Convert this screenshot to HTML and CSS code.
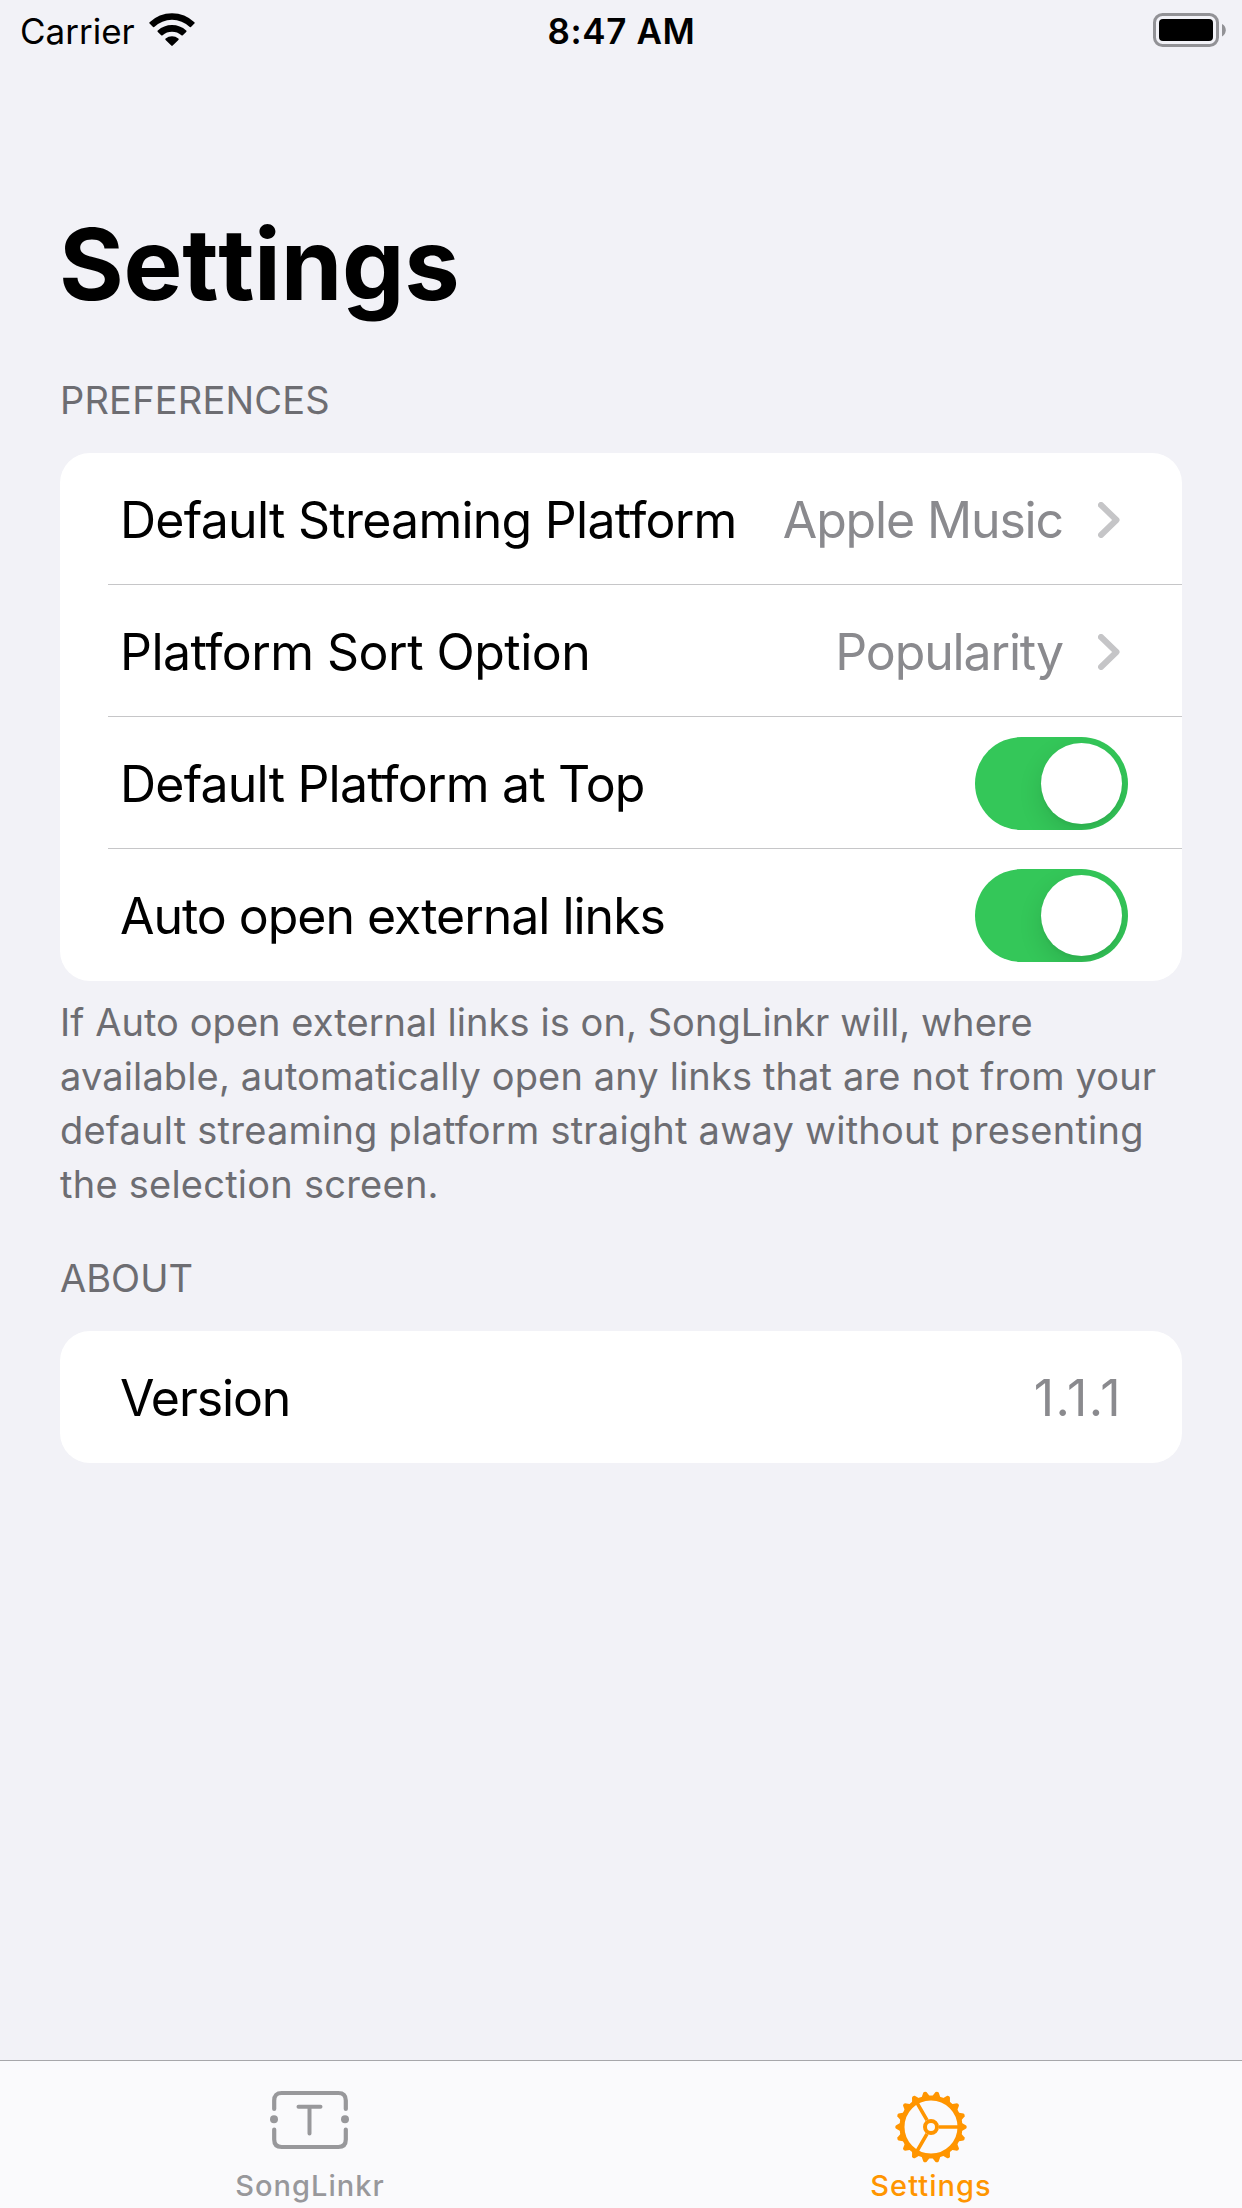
FILE: index.html
```html
<!DOCTYPE html>
<html lang="en">
<head>
<meta charset="utf-8">
<title>Settings</title>
<link rel="stylesheet" href="styles.css">
</head>
<body>
<div class="screen">
  <header class="status">
    <div class="status-left">
      <span class="carrier">Carrier</span>
      <svg class="wifi" viewBox="0 0 46 33" width="46" height="33"><path d="M0.600 9.300A32 32 0 0 1 45.400 9.300Q46 10 45.400 10.600L42.200 13.800Q41.500 14.500 40.800 13.900A26 26 0 0 0 5.200 13.900Q4.500 14.500 3.800 13.800L0.600 10.600Q0 10 0.600 9.300zM8.800 17.600A21 21 0 0 1 37.200 17.600Q37.900 18.300 37.200 19L33.800 22.300Q33.100 22.900 32.400 22.300A14.500 14.500 0 0 0 13.600 22.300Q12.900 22.900 12.200 22.300L8.800 19Q8.100 18.300 8.800 17.600zM16.700 25.600A9.500 9.500 0 0 1 29.300 25.600Q30.100 26.300 29.400 27L23.700 32.600Q23 33.200 22.300 32.600L16.600 27Q15.900 26.300 16.700 25.600z"/></svg>
    </div>
    <span class="time">8:47 AM</span>
    <div class="status-right">
      <svg class="battery" width="73" height="34" viewBox="0 0 73 34"><rect x="1.500" y="1.500" width="63" height="31" rx="8" fill="none" stroke="#929296" stroke-width="3"/><rect x="6" y="6" width="54" height="22" rx="4"/><path d="M69 11v12.400c5-2.400 5-10 0-12.400z" fill="#929296"/></svg>
    </div>
  </header>
  <main class="content">
    <h1 class="title">Settings</h1>
    <h2 class="label label-prefs">PREFERENCES</h2>
    <section class="card">
      <div class="row"><span class="name n1">Default Streaming Platform</span><span class="value">Apple Music</span><svg class="chevron" width="22" height="36" viewBox="0 0 22 36"><path d="M3 3l15.500 15L3 33"/></svg></div>
      <div class="row"><span class="name n2">Platform Sort Option</span><span class="value">Popularity</span><svg class="chevron" width="22" height="36" viewBox="0 0 22 36"><path d="M3 3l15.500 15L3 33"/></svg></div>
      <div class="row"><span class="name n3">Default Platform at Top</span><span class="toggle"><span class="knob"></span></span></div>
      <div class="row"><span class="name n4">Auto open external links</span><span class="toggle"><span class="knob"></span></span></div>
    </section>
    <p class="note"><span class="l1">If Auto open external links is on, SongLinkr will, where</span><br><span class="l2">available, automatically open any links that are not from your</span><br><span class="l3">default streaming platform straight away without presenting</span><br><span class="l4">the selection screen.</span></p>
    <h2 class="label label-about">ABOUT</h2>
    <section class="card"><div class="row"><span class="name n5">Version</span><span class="value version">1.1.1</span></div></section>
  </main>
  <nav class="tabs">
    <div class="tab">
      <svg width="80" height="60" viewBox="0 0 80 60" fill="none" stroke="currentColor" stroke-width="4.200" stroke-linecap="round"><path d="M4.200 19V10.500Q4.200 3 11.700 3H68.300Q75.800 3 75.800 10.500V19M4.200 39.500V49.500Q4.200 57 11.700 57H68.300Q75.800 57 75.800 49.500V39.500"/><path d="M28.500 16.800H50.500M39.500 16.800V43.500" stroke-width="4"/><g fill="currentColor" stroke="none"><circle cx="4" cy="29.300" r="4"/><circle cx="75" cy="29.300" r="4"/></g></svg>
      <span class="tab-name">SongLinkr</span>
    </div>
    <div class="tab active">
      <svg width="74" height="74" viewBox="-37 -37 74 74" fill="none" stroke="currentColor">
        <defs><path id="tooth" d="M30 -4.500L35.200 -1.600Q36.400 0 35.200 1.600L30 4.500z" fill="currentColor" stroke="none"/></defs>
        <circle r="29" stroke-width="5"/><circle r="6" stroke-width="4"/>
        <path d="M8 0H28M-4 -6.900L-14 -24.200M-4 6.900L-14 24.200" stroke-width="3.600"/>
        <use href="#tooth"/><use href="#tooth" transform="rotate(20)"/><use href="#tooth" transform="rotate(40)"/><use href="#tooth" transform="rotate(60)"/><use href="#tooth" transform="rotate(80)"/><use href="#tooth" transform="rotate(100)"/><use href="#tooth" transform="rotate(120)"/><use href="#tooth" transform="rotate(140)"/><use href="#tooth" transform="rotate(160)"/><use href="#tooth" transform="rotate(180)"/><use href="#tooth" transform="rotate(200)"/><use href="#tooth" transform="rotate(220)"/><use href="#tooth" transform="rotate(240)"/><use href="#tooth" transform="rotate(260)"/><use href="#tooth" transform="rotate(280)"/><use href="#tooth" transform="rotate(300)"/><use href="#tooth" transform="rotate(320)"/><use href="#tooth" transform="rotate(340)"/>
      </svg>
      <span class="tab-name">Settings</span>
    </div>
  </nav>
</div>
</body>
</html>
```
FILE: styles.css
```css
* { box-sizing: border-box; }
body { margin: 0; background: #f2f2f7; color: #000; font-family: Inter, "Liberation Sans", sans-serif; }
.screen { width: 1242px; height: 2208px; display: flex; flex-direction: column; overflow: hidden; }
svg { display: block; flex: none; }

.status { height: 60px; padding: 0 16px 0 20px; display: grid; grid-template-columns: 1fr auto 1fr; line-height: 62px; font-size: 35px; }
.status-left { display: flex; }
.wifi { margin: 13px 0 0 14px; }
.time { font-weight: 600; letter-spacing: .6px; padding-right: 3px; }
.status-right { display: flex; justify-content: flex-end; padding-top: 13px; }

.content { flex: 1; min-height: 0; padding: 0 60px; }
.title { margin: 144px 0 0 -1px; font-size: 99px; line-height: 120px; font-weight: 700; font-kerning: none; letter-spacing: -.3px; }
.label { margin: 0; font-size: 38px; line-height: 48px; font-weight: 400; color: #6d6d72; }
.label-prefs { padding-top: 52px; padding-bottom: 29px; letter-spacing: .2px; }
.label-about { padding-top: 43px; padding-bottom: 29px; }

.card { background: #fff; border-radius: 30px; padding-left: 48px; }
.row { height: 132px; display: flex; align-items: center; padding: 2px 60px 0 12px; border-bottom: 1px solid #c6c6c8; font-size: 50px; white-space: nowrap; }
.row:last-child { border-bottom-color: transparent; }
.name { flex: 1; }
.n1 { letter-spacing: -.74px; }
.n2 { letter-spacing: -.52px; }
.n3 { letter-spacing: -.8px; }
.n4 { letter-spacing: -1.03px; }
.n5 { letter-spacing: -1.1px; }
.value { color: #8a8a8e; letter-spacing: -1.15px; }
.version { letter-spacing: 1.4px; }
.chevron { margin: 0 2px 0 35px; }
.chevron path { fill: none; stroke: #c5c5c7; stroke-width: 6; stroke-linecap: round; stroke-linejoin: round; }
.toggle { width: 153px; height: 93px; margin-right: -6px; padding: 6px; border-radius: 47px; background: #34c759; overflow: hidden; display: flex; justify-content: flex-end; }
.knob { width: 81px; height: 81px; border-radius: 50%; background: #fff; box-shadow: 0 9px 24px rgba(0, 0, 0, .12), 0 3px 3px rgba(0, 0, 0, .03); }

.note { margin: 14px 0 0; font-size: 38px; line-height: 54px; color: #6d6d72; white-space: nowrap; }
.l1 { letter-spacing: .065px; }
.l2 { letter-spacing: .14px; }
.l3 { letter-spacing: .22px; }
.l4 { letter-spacing: .24px; }

.tabs { height: 148px; border-top: 1px solid #a7a7aa; background: #fafafc; display: flex; }
.tab { flex: 1; padding-top: 29px; display: flex; flex-direction: column; align-items: center; color: #98989b; }
.tab svg { margin: 0 2px 16px 0; }
.tab.active { color: #ff9500; }
.tab.active svg { margin-bottom: 2px; }
.tab-name { font-size: 29px; line-height: 40px; font-weight: 500; letter-spacing: 1.05px; margin-right: 1px; }
```
